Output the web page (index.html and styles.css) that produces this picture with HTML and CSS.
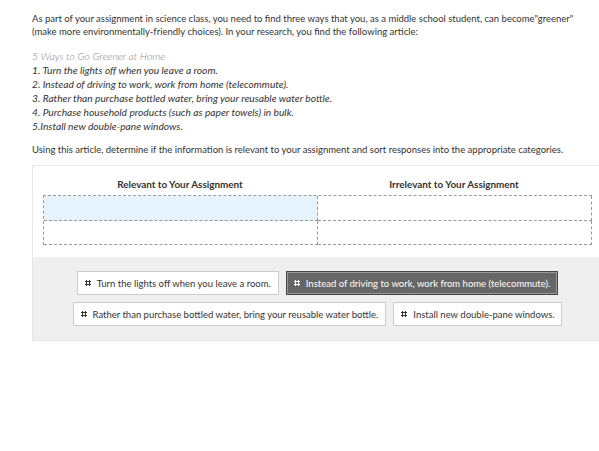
FILE: index.html
```html
<!DOCTYPE html>
<html lang="en">
<head>
  <meta charset="UTF-8">
  <title>Sort the responses</title>
  <link rel="stylesheet" href="styles.css">
</head>
<body>
  <div class="pregunta">
    <p class="intro">As part of your assignment in science class, you need to find three ways that you, as a middle school student, can become"greener" (make more environmentally-friendly choices). In your research, you find the following article:</p>

    <div class="articulo">
      <div class="titulo">5 Ways to Go Greener at Home</div>
      <div class="item">1. Turn the lights off when you leave a room.</div>
      <div class="item">2. Instead of driving to work, work from home (telecommute).</div>
      <div class="item">3. Rather than purchase bottled water, bring your reusable water bottle.</div>
      <div class="item">4. Purchase household products (such as paper towels) in bulk.</div>
      <div class="item">5.Install new double-pane windows.</div>
    </div>

    <p class="instruccion">Using this article, determine if the information is relevant to your assignment and sort responses into the appropriate categories.</p>

    <div class="panel">
      <div class="zona">
        <div class="cabeceras">
          <div>Relevant to Your Assignment</div>
          <div>Irrelevant to Your Assignment</div>
        </div>
        <div class="rejilla">
          <div class="celda activa"></div>
          <div class="celda"></div>
          <div class="celda"></div>
          <div class="celda"></div>
        </div>
      </div>

      <div class="opciones">
        <div class="chip"><span class="asa"></span>Turn the lights off when you leave a room.</div>
        <div class="chip elegido"><span class="asa"></span>Instead of driving to work, work from home (telecommute).</div>
        <div class="chip"><span class="asa"></span>Rather than purchase bottled water, bring your reusable water bottle.</div>
        <div class="chip"><span class="asa"></span>Install new double-pane windows.</div>
      </div>
    </div>
  </div>
</body>
</html>
```

FILE: styles.css
```css
body {
  margin: 0;
  padding: 0;
  background: #fff;
  color: #333;
  font-family: 'Lato', 'Liberation Sans', sans-serif;
  font-size: 9.5px;
  overflow: hidden;
}

.pregunta {
  padding: 12px 0 0 32px;
}

.intro {
  margin: 0;
  width: 556px;
  line-height: 13px;
}

.articulo {
  margin-top: 11px;
  line-height: 14px;
  font-size: 10.2px;
}

.titulo {
  color: #888;
  font-style: italic;
  font-weight: 300;
  font-size: 10.4px;
}

.item {
  font-style: italic;
}

.instruccion {
  margin: 10px 0 0;
  line-height: 13px;
}

.panel {
  margin-top: 9px;
  width: 569px;
  border: 1px solid #e6e6e6;
}

.zona {
  padding: 11px 10px 12px 10px;
}

.cabeceras {
  display: grid;
  grid-template-columns: 274px 274px;
  font-weight: bold;
  font-size: 9.9px;
  text-align: center;
  line-height: 14px;
  margin-bottom: 4px;
}

.rejilla {
  display: grid;
  grid-template-columns: 274px 274px;
  grid-template-rows: 25px 24px;
  border-top: 1px dashed #999;
  border-left: 1px dashed #999;
  width: 548px;
}

.celda {
  border-right: 1px dashed #999;
  border-bottom: 1px dashed #999;
}

.celda.activa {
  background: #e6f2fc;
}

.opciones {
  background: #efefef;
  padding: 14px 10px;
  display: flex;
  flex-wrap: wrap;
  justify-content: center;
  gap: 7px;
}

.chip {
  display: flex;
  align-items: center;
  height: 24px;
  box-sizing: border-box;
  padding: 0 7px;
  background: #fff;
  border: 1px solid #ccc;
  white-space: nowrap;
}

.chip.elegido {
  background: #666;
  color: #fff;
  border-color: #444;
  box-shadow: inset 0 0 0 1px #999;
}

.asa {
  width: 6px;
  height: 6px;
  margin-right: 6px;
  background:
    radial-gradient(circle, #333 60%, transparent 61%) 0 0 / 3px 3px;
}

.chip.elegido .asa {
  background:
    radial-gradient(circle, #fff 60%, transparent 61%) 0 0 / 3px 3px;
}
```
